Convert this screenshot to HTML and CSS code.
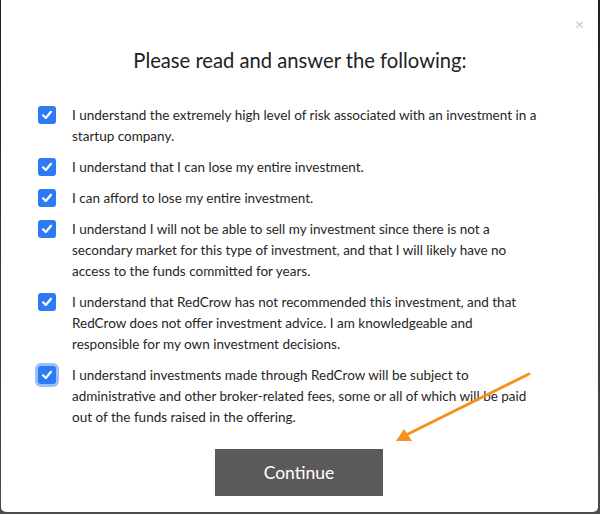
FILE: index.html
```html
<!DOCTYPE html>
<html>
<head>
<meta charset="utf-8">
<link rel="stylesheet" href="styles.css">
</head>
<body>
<div class="modal">
  <button class="close" aria-label="Close">&times;</button>
  <h2 class="title">Please read and answer the following:</h2>
  <ul class="list">
    <li class="item"><span class="cb"><svg viewBox="0 0 16 16" width="16" height="16"><path d="M4 8.3 L6.8 11 L12 4.8" fill="none" stroke="#fff" stroke-width="2.2" stroke-linecap="round" stroke-linejoin="round"/></svg></span><span class="txt">I understand the extremely high level of risk associated with an investment in a startup company.</span></li>
    <li class="item"><span class="cb"><svg viewBox="0 0 16 16" width="16" height="16"><path d="M4 8.3 L6.8 11 L12 4.8" fill="none" stroke="#fff" stroke-width="2.2" stroke-linecap="round" stroke-linejoin="round"/></svg></span><span class="txt">I understand that I can lose my entire investment.</span></li>
    <li class="item"><span class="cb"><svg viewBox="0 0 16 16" width="16" height="16"><path d="M4 8.3 L6.8 11 L12 4.8" fill="none" stroke="#fff" stroke-width="2.2" stroke-linecap="round" stroke-linejoin="round"/></svg></span><span class="txt">I can afford to lose my entire investment.</span></li>
    <li class="item"><span class="cb"><svg viewBox="0 0 16 16" width="16" height="16"><path d="M4 8.3 L6.8 11 L12 4.8" fill="none" stroke="#fff" stroke-width="2.2" stroke-linecap="round" stroke-linejoin="round"/></svg></span><span class="txt">I understand I will not be able to sell my investment since there is not a secondary market for this type of investment, and that I will likely have no access to the funds committed for years.</span></li>
    <li class="item"><span class="cb"><svg viewBox="0 0 16 16" width="16" height="16"><path d="M4 8.3 L6.8 11 L12 4.8" fill="none" stroke="#fff" stroke-width="2.2" stroke-linecap="round" stroke-linejoin="round"/></svg></span><span class="txt">I understand that RedCrow has not recommended this investment, and that RedCrow does not offer investment advice. I am knowledgeable and responsible for my own investment decisions.</span></li>
    <li class="item"><span class="cb focus"><svg viewBox="0 0 16 16" width="16" height="16"><path d="M4 8.3 L6.8 11 L12 4.8" fill="none" stroke="#fff" stroke-width="2.2" stroke-linecap="round" stroke-linejoin="round"/></svg></span><span class="txt">I understand investments made through RedCrow will be subject to administrative and other broker-related fees, some or all of which will be paid out of the funds raised in the offering.</span></li>
  </ul>
  <div class="actions"><button class="continue">Continue</button></div>
  <svg class="arrow" width="600" height="514" viewBox="0 0 600 514"><line x1="529" y1="374" x2="406" y2="435" stroke="#f59121" stroke-width="3" stroke-linecap="round"/><polygon points="396,441 404,429 412,441" fill="#f59121"/></svg>
</div>
</body>
</html>
```
FILE: styles.css
```css
html, body { margin: 0; padding: 0; }
body {
  width: 600px;
  height: 514px;
  background: linear-gradient(#1b2030, #4b4b4d);
  font-family: Lato, "Open Sans", sans-serif;
  overflow: hidden;
}
.modal {
  position: relative;
  margin-left: 1px;
  width: 597px;
  height: 512px;
  background: #fff;
  border-radius: 0 0 5px 5px;
  box-sizing: border-box;
  padding: 44px 58px 0 37px;
}
.close {
  position: absolute;
  top: 14px;
  right: 14px;
  border: 0;
  background: none;
  color: #c8c8c8;
  font-size: 16px;
  font-family: Lato, sans-serif;
  padding: 0;
  line-height: 20px;
}
.title {
  margin: 0 0 29px;
  text-align: center;
  font-weight: 400;
  font-size: 20.2px;
  color: #222;
  line-height: 32px;
  padding-left: 22px;
}
.list { list-style: none; margin: 0; padding: 0; }
.item {
  display: flex;
  gap: 16px;
  margin-bottom: 10px;
  font-size: 13.5px;
  line-height: 21px;
  color: #262626;
}
.cb {
  flex: none;
  width: 18px;
  height: 18px;
  margin-top: 1px;
  border-radius: 3px;
  background: #2d7bf4;
  display: flex;
  align-items: center;
  justify-content: center;
}
.cb.focus { box-shadow: 0 0 0 3px #9cc0f9; }
.actions { display: flex; justify-content: center; margin-top: 21px; padding-left: 20px; }
.continue {
  width: 168px;
  height: 47px;
  background: #5a5a5a;
  color: #fff;
  border: 0;
  font-family: Lato, sans-serif;
  font-size: 17.5px;
}
.arrow { position: absolute; left: -1px; top: 0; pointer-events: none; }
```
